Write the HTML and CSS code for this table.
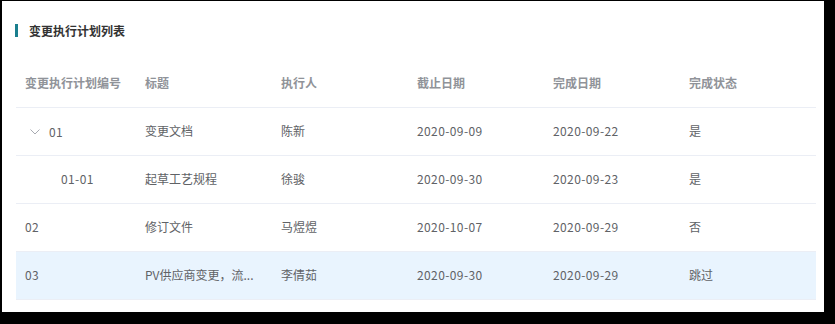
FILE: index.html
```html
<!DOCTYPE html>
<html lang="zh-CN">
<head>
<meta charset="utf-8">
<link rel="stylesheet" href="styles.css">
</head>
<body>
<div class="card">
  <div class="title"><span class="bar"></span><span class="title-text">变更执行计划列表</span></div>
  <table class="grid">
    <colgroup>
      <col class="c1"><col class="c"><col class="c"><col class="c"><col class="c"><col class="c">
    </colgroup>
    <thead>
      <tr>
        <th>变更执行计划编号</th><th>标题</th><th>执行人</th><th>截止日期</th><th>完成日期</th><th>完成状态</th>
      </tr>
    </thead>
    <tbody>
      <tr>
        <td><span class="code lvl0"><svg class="chev" width="10" height="6" viewBox="0 0 10 6"><path d="M0.5 0.5 L5 5 L9.5 0.5" fill="none" stroke="#a8abb2" stroke-width="1"/></svg><span class="num">01</span></span></td>
        <td>变更文档</td><td>陈新</td><td class="num">2020-09-09</td><td class="num">2020-09-22</td><td>是</td>
      </tr>
      <tr>
        <td><span class="code lvl1 num">01-01</span></td>
        <td>起草工艺规程</td><td>徐骏</td><td class="num">2020-09-30</td><td class="num">2020-09-23</td><td>是</td>
      </tr>
      <tr>
        <td class="num">02</td>
        <td>修订文件</td><td>马煜煜</td><td class="num">2020-10-07</td><td class="num">2020-09-29</td><td>否</td>
      </tr>
      <tr class="hl">
        <td class="num">03</td>
        <td>PV供应商变更，流...</td><td>李倩茹</td><td class="num">2020-09-30</td><td class="num">2020-09-29</td><td>跳过</td>
      </tr>
    </tbody>
  </table>
</div>
</body>
</html>
```

FILE: styles.css
```css
html, body {
  margin: 0;
  padding: 0;
  background: #000;
}
body {
  width: 835px;
  height: 324px;
  overflow: hidden;
  font-family: "Noto Sans CJK SC", "Noto Sans", sans-serif;
  font-size: 12px;
}
.card {
  background: #fff;
  margin: 1px 11px 0 2px;
  height: 311px;
  padding: 0 8px 0 14px;
  box-sizing: border-box;
}
.title {
  display: flex;
  align-items: center;
  height: 60px;
  padding-bottom: 2px;
  box-sizing: border-box;
}
.bar {
  width: 3px;
  height: 13px;
  background: #1a7f8e;
  margin-left: -1px;
  margin-right: 11px;
}
.title-text {
  font-weight: bold;
  color: #333;
  font-size: 12px;
}
.grid {
  border-collapse: collapse;
  table-layout: fixed;
  width: 800px;
}
.c1 { width: 120px; }
.c { width: 136px; }
th {
  text-align: left;
  font-weight: bold;
  color: #909399;
  height: 43px;
  padding: 0 9px 3px;
  border-bottom: 1px solid #ebeef5;
  white-space: nowrap;
}
td {
  height: 44px;
  padding: 0 9px 3px;
  color: #606266;
  border-bottom: 1px solid #ebeef5;
  white-space: nowrap;
  overflow: hidden;
}
.num {
  letter-spacing: 0.4px;
}
tr.hl td {
  background: #e9f4fe;
}
.code {
  display: inline-flex;
  align-items: center;
}
.lvl0 .chev {
  margin-left: 5px;
  margin-right: 9px;
  position: relative;
  top: 1px;
}
.lvl1 {
  padding-left: 36px;
}
```
